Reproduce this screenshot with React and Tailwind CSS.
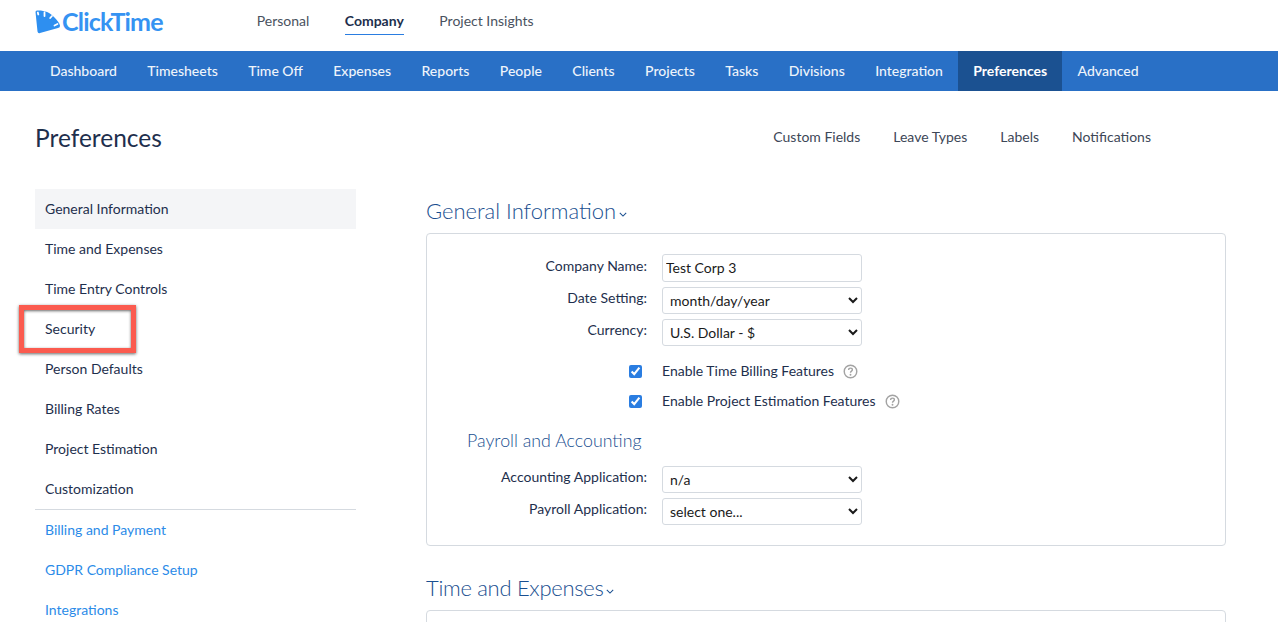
import React from 'react';

const topLinks = ["Personal", "Company", "Project Insights"];
const navLinks = ["Dashboard", "Timesheets", "Time Off", "Expenses", "Reports", "People", "Clients", "Projects", "Tasks", "Divisions", "Integration", "Preferences", "Advanced"];
const sideLinks = ["General Information", "Time and Expenses", "Time Entry Controls", "Security", "Person Defaults", "Billing Rates", "Project Estimation", "Customization"];
const sideExtra = ["Billing and Payment", "GDPR Compliance Setup", "Integrations"];
const subLinks = ["Custom Fields", "Leave Types", "Labels", "Notifications"];

function Logo() {
  return (
    <div className="flex items-center">
      <svg viewBox="0 0 26 24" className="w-[26px] h-[24px]">
        <path d="M.5 2 Q.5 .5 2 .5 C8 0 15 2 19 7 C22 10 24.500 13 25 15.500 Q25.300 17.500 23 18 L5 23 Q3 23.800 2.500 21.500 Z" fill="#2e8ff0" />
        <path d="M2.800 2.500 L3.300 4.500 M9.500 2.500 L9.500 6 M17 6 L15.200 8 M22.500 14 L19.500 15.500" stroke="#fff" strokeWidth="1.800" strokeLinecap="round" />
      </svg>
      <span className="text-[25px] leading-none font-bold text-[#3593f2] tracking-[-0.8px] ml-[1px]">ClickTime</span>
    </div>
  );
}

function HelpIcon() {
  return (
    <svg viewBox="0 0 16 16" className="w-[15px] h-[15px] text-[#a3a3a3]" fill="none">
      <circle cx="8" cy="8" r="6.700" stroke="currentColor" strokeWidth="1.500" />
      <path d="M6 6.300 C6 5 7 4.400 8 4.400 C9.200 4.400 10 5.200 10 6.200 C10 7.600 8 7.600 8 9.300" stroke="currentColor" strokeWidth="1.500" />
      <circle cx="8" cy="11.400" r="1" fill="currentColor" />
    </svg>
  );
}

function Chevron() {
  return (
    <svg viewBox="0 0 10 6" className="w-2 h-[5px] ml-[3px] mt-[6px]" fill="none" stroke="#1a4f90" strokeWidth="1.300">
      <path d="M1 1l4 4 4-4" />
    </svg>
  );
}

function Row({ label, children }) {
  return (
    <div className="flex items-center">
      <label className="w-[235px] pr-[15px] mb-[5px] text-right text-sm text-[#1e2f4d] leading-none">{label}</label>
      {children}
    </div>
  );
}

function Select({ value }) {
  return (
    <select defaultValue={value} className="w-[200px] h-[27px] bg-white border border-[#d5dae0] rounded-[3px] pl-[3px] text-sm text-[#1a1a1a] appearance-auto">
      <option>{value}</option>
    </select>
  );
}

function CheckRow({ label }) {
  return (
    <div className="flex items-center h-[30px]">
      <div className="w-[235px] pr-[20px] flex justify-end">
        <input type="checkbox" defaultChecked readOnly className="w-[13px] h-[13px] accent-[#2a7de1]" />
      </div>
      <span className="text-sm text-[#1e2f4d]">{label}</span>
      <span className="ml-[9px] flex"><HelpIcon /></span>
    </div>
  );
}

export default function App() {
  return (
    <div className="h-[622px] overflow-hidden bg-white font-['Lato',sans-serif]">
      <header className="h-[51px] flex items-start pl-[35px]">
        <div className="mt-[9px]"><Logo /></div>
        <nav className="flex items-start gap-[35.500px] ml-[94px]">
          {topLinks.map((t) => (
            <a key={t} className={t === "Company" ? "h-[35px] leading-[42px] text-sm font-bold text-[#1e2f4d] border-b border-[#2a7de1]" : "leading-[42px] text-sm text-[#4a5260]"}>{t}</a>
          ))}
        </nav>
      </header>

      <nav className="h-10 bg-[#2970c6] flex pl-[34.800px]">
        {navLinks.map((t) => (
          <a key={t} className={t === "Preferences" ? "px-[15.200px] leading-10 text-sm font-bold text-white bg-[#1b5191]" : "px-[15.200px] leading-10 text-sm font-medium text-[#eef4fb]"}>{t}</a>
        ))}
      </nav>

      <div className="flex items-center h-[98px] pl-[35px]">
        <h1 className="text-[24.500px] text-[#1e2f4d] font-normal mt-[-4px]">Preferences</h1>
        <div className="ml-auto mr-[127px] flex gap-[33px] mt-[-6px]">
          {subLinks.map((t) => <a key={t} className="text-sm text-[#3d4757]">{t}</a>)}
        </div>
      </div>

      <div className="flex pl-[35px]">
        <aside className="relative w-[321px] shrink-0">
          <ul>
            {sideLinks.map((t, i) => (
              <li key={t} className={i === 0 ? "h-10 leading-10 pl-[10px] text-sm text-[#1e2f4d] bg-[#f4f5f7]" : "h-10 leading-10 pl-[10px] text-sm text-[#1e2f4d]"}>{t}</li>
            ))}
          </ul>
          <ul className="border-t border-[#d5dae0]">
            {sideExtra.map((t) => <li key={t} className="h-10 leading-10 pl-[10px] text-sm text-[#2b8be8]">{t}</li>)}
          </ul>
          <div className="absolute left-[-16px] top-[116px] w-[117px] h-[48px] border-[5px] border-[#fb5b4f] shadow-[0_1px_3px_rgba(0,0,0,.6),inset_0_1px_3px_rgba(0,0,0,.6)]" />
        </aside>

        <main className="ml-[70px] w-[800px] shrink-0">
          <h2 className="text-[22px] leading-7 font-light text-[#1a4f90] mt-[8px] flex items-center">
            General Information
            <Chevron />
          </h2>
          <section className="mt-[8px] h-[313px] border border-[#d5dae0] rounded-[4px] pt-[20px]">
            <div className="flex flex-col gap-[5px]">
              <Row label="Company Name:">
                <input defaultValue="Test Corp 3" className="w-[200px] h-[28px] border border-[#d5dae0] rounded-[3px] px-[3px] pb-[1px] text-sm text-[#1a1a1a]" />
              </Row>
              <Row label="Date Setting:"><Select value="month/day/year" /></Row>
              <Row label="Currency:"><Select value="U.S. Dollar - $" /></Row>
            </div>
            <div className="mt-[10px]">
              <CheckRow label="Enable Time Billing Features" />
              <CheckRow label="Enable Project Estimation Features" />
            </div>
            <h3 className="ml-[40px] mt-[12px] text-[17.800px] leading-6 font-light text-[#1a4f90]">Payroll and Accounting</h3>
            <div className="flex flex-col gap-[5px] mt-[14px]">
              <Row label="Accounting Application:"><Select value="n/a" /></Row>
              <Row label="Payroll Application:"><Select value="select one..." /></Row>
            </div>
          </section>
          <h2 className="text-[22px] leading-7 font-light tracking-[-0.3px] text-[#1a4f90] mt-[28px] flex items-center">
            Time and Expenses
            <Chevron />
          </h2>
          <section className="mt-[8px] h-[100px] border border-[#d5dae0] rounded-[4px]" />
        </main>
      </div>
    </div>
  );
}
